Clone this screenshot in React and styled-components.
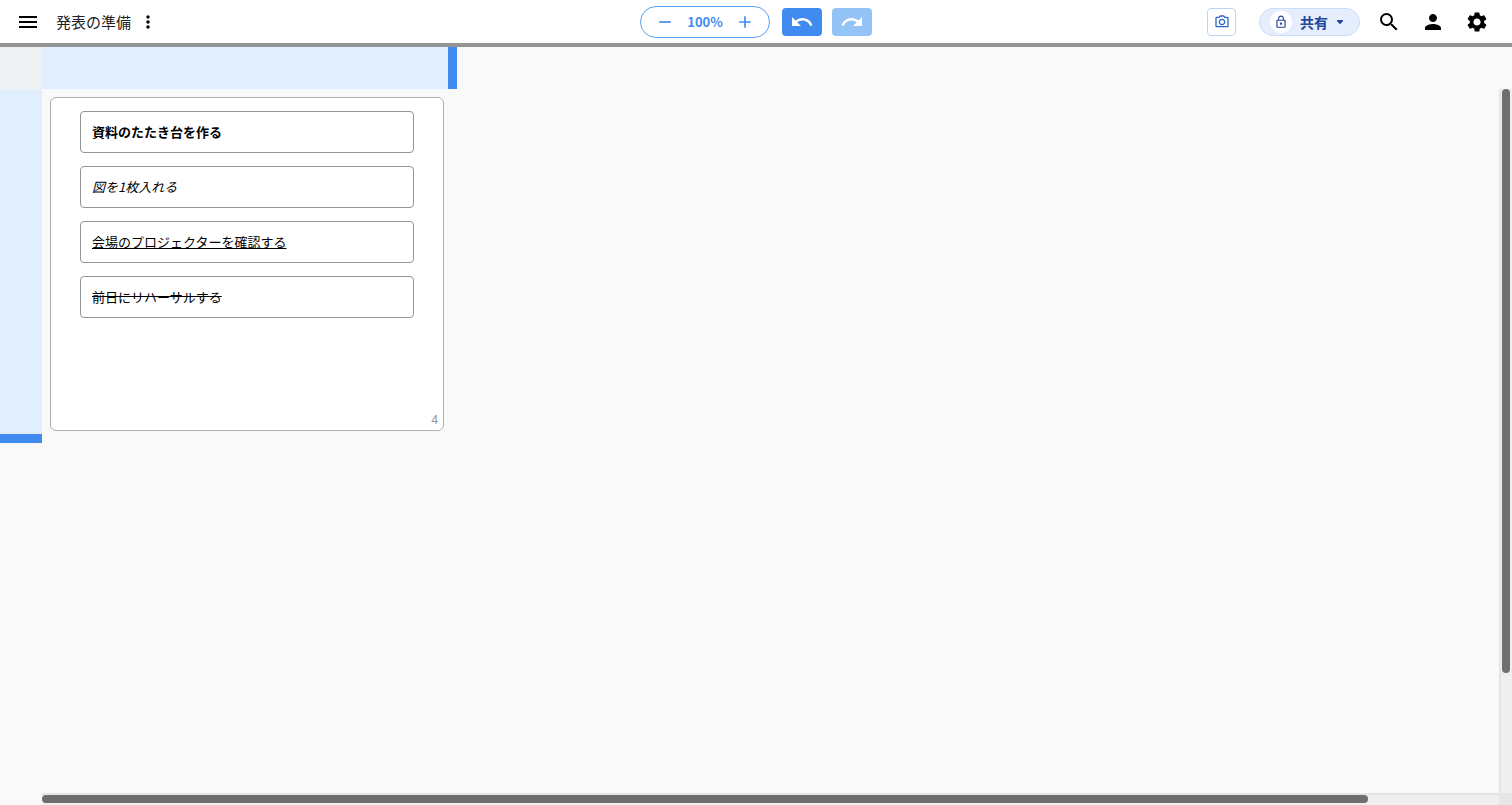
import React from 'react';
import styled, { createGlobalStyle } from 'styled-components';
import {
  MdAdd,
  MdLockOutline,
  MdMenu,
  MdMoreVert,
  MdOutlinePhotoCamera,
  MdPerson,
  MdRedo,
  MdRemove,
  MdSearch,
  MdSettings,
  MdUndo,
} from 'react-icons/md';

const tasks = [
  { id: 1, text: '資料のたたき台を作る', look: 'bold' },
  { id: 2, text: '図を1枚入れる', look: 'italic' },
  { id: 3, text: '会場のプロジェクターを確認する', look: 'underline' },
  { id: 4, text: '前日にリハーサルする', look: 'strike' },
];

const CaretIcon = () => (
  <svg width='8' height='6' viewBox='0 0 8 6' aria-hidden='true'>
    <path
      d='M1.6 1.7h4.8L4 4.2z'
      fill='currentColor'
      stroke='currentColor'
      strokeWidth='1.4'
      strokeLinejoin='round'
    />
  </svg>
);

const App = () => {
  return (
    <>
      <GlobalStyle />
      <Page>
        <Header>
          <TitleGroup>
            <IconButton $width={40} aria-label='メニュー'>
              <MdMenu size={24} />
            </IconButton>
            <Title>発表の準備</Title>
            <IconButton $width={34} aria-label='その他'>
              <MdMoreVert size={20} />
            </IconButton>
          </TitleGroup>
          <ZoomGroup>
            <ZoomControl>
              <ZoomButton aria-label='縮小'>
                <MdRemove size={20} />
              </ZoomButton>
              <span>100%</span>
              <ZoomButton aria-label='拡大'>
                <MdAdd size={20} />
              </ZoomButton>
            </ZoomControl>
            <HistoryButton aria-label='元に戻す'>
              <MdUndo size={24} />
            </HistoryButton>
            <HistoryButton $faded aria-label='やり直す'>
              <MdRedo size={24} />
            </HistoryButton>
          </ZoomGroup>
          <Actions>
            <CameraButton aria-label='スクリーンショット'>
              <MdOutlinePhotoCamera size={16} />
            </CameraButton>
            <ShareButton>
              <LockBadge>
                <MdLockOutline size={14} />
              </LockBadge>
              共有
              <CaretIcon />
            </ShareButton>
            <IconButton $width={44} aria-label='検索'>
              <MdSearch size={24} />
            </IconButton>
            <IconButton $width={44} aria-label='アカウント'>
              <MdPerson size={24} />
            </IconButton>
            <IconButton $width={44} aria-label='設定'>
              <MdSettings size={24} />
            </IconButton>
          </Actions>
        </Header>
        <Board>
          <Corner />
          <ColumnHead />
          <RowHead />
          <Cell>
            <Card>
              <TaskList>
                {tasks.map(({ id, text, look }) => (
                  <Task key={id} $look={look}>
                    {text}
                  </Task>
                ))}
              </TaskList>
              <Count>{tasks.length}</Count>
            </Card>
          </Cell>
          <VerticalTrack>
            <VerticalThumb />
          </VerticalTrack>
          <HorizontalTrack>
            <HorizontalThumb />
          </HorizontalTrack>
          <TrackCorner />
        </Board>
      </Page>
    </>
  );
};

export default App;

const GlobalStyle = createGlobalStyle`
  * {
    box-sizing: border-box;
  }
  body {
    margin: 0;
    background: #f9f9f9;
    color: #000;
    font-family: 'Noto Sans CJK JP', sans-serif;
  }
  button {
    display: flex;
    align-items: center;
    justify-content: center;
    padding: 0;
    border: none;
    background: none;
    color: inherit;
    font: inherit;
    cursor: pointer;
  }
`;

const Page = styled.div`
  display: flex;
  flex-direction: column;
  min-height: 100vh;
`;

const Header = styled.header`
  display: grid;
  grid-template-columns: 1fr auto 1fr;
  align-items: center;
  height: 47px;
  padding: 0 8px;
  background: #fff;
  border-bottom: 4px solid #949494;
`;

const TitleGroup = styled.div`
  display: flex;
  align-items: center;
`;

const Title = styled.h1`
  margin: 0 0 0 8px;
  color: #222;
  font-size: 15px;
  font-weight: 400;
  line-height: 24px;
`;

const IconButton = styled.button`
  width: ${({ $width }) => $width}px;
  height: 40px;
`;

const ZoomGroup = styled.div`
  display: flex;
  align-items: center;
  gap: 10px;
`;

const ZoomControl = styled.div`
  display: flex;
  align-items: center;
  justify-content: space-between;
  width: 130px;
  height: 32px;
  padding: 0 12px;
  margin-right: 2px;
  border: 1px solid #5a9fee;
  border-radius: 16px;
  color: #408bf0;
  font-size: 13px;
  font-weight: 700;
  line-height: 20px;
`;

const ZoomButton = styled.button`
  width: 24px;
  height: 24px;
`;

const HistoryButton = styled.button`
  && {
    width: 40px;
    height: 28px;
    border-radius: 4px;
    background: ${({ $faded }) => ($faded ? '#93c3f7' : '#408bf0')};
    color: #fff;
  }
`;

const Actions = styled.div`
  display: flex;
  align-items: center;
  justify-content: flex-end;
  padding-right: 5px;
`;

const CameraButton = styled.button`
  && {
    width: 29px;
    height: 28px;
    margin-right: 23px;
    border: 1px solid #bcd5f5;
    border-radius: 4px;
    color: #2f66c8;
  }
`;

const ShareButton = styled.button`
  && {
    justify-content: flex-start;
    width: 101px;
    height: 28px;
    margin-right: 7px;
    padding-left: 10px;
    border: 1px solid #c9def9;
    border-radius: 14px;
    background: #e6edfc;
    color: #24469c;
    font-size: 14px;
    font-weight: 700;
    line-height: 20px;
    gap: 8px;
  }
`;

const LockBadge = styled.span`
  display: flex;
  align-items: center;
  justify-content: center;
  width: 22px;
  height: 22px;
  border-radius: 50%;
  background: #fff;
`;

const Board = styled.main`
  flex: 1;
  display: grid;
  grid-template-columns: 42px 415px 1fr 13px;
  grid-template-rows: 42px auto 1fr 12px;
`;

const Corner = styled.div`
  background: #f0f1f3;
`;

const ColumnHead = styled.div`
  background: #e1effd;
  border-right: 9px solid #408bf0;
`;

const RowHead = styled.div`
  grid-area: 2 / 1;
  background: #e1effd;
  border-bottom: 9px solid #408bf0;
`;

const Cell = styled.section`
  display: flex;
  grid-area: 2 / 2;
  padding: 8px 13px 12px 8px;
`;

const Card = styled.article`
  flex: 1;
  display: flex;
  flex-direction: column;
  justify-content: space-between;
  min-height: 334px;
  padding: 13px 5px 2px 29px;
  border: 1px solid #b0b0b0;
  border-radius: 6px;
  background: #fff;
`;

const TaskList = styled.ul`
  display: flex;
  flex-direction: column;
  gap: 13px;
  margin: 0 24px 0 0;
  padding: 0;
  list-style: none;
`;

const Task = styled.li`
  padding: 10px 11px;
  border: 1px solid #949494;
  border-radius: 4px;
  font-size: 13px;
  font-weight: ${({ $look }) => ($look === 'bold' ? 700 : 400)};
  font-style: ${({ $look }) => ($look === 'italic' ? 'italic' : 'normal')};
  line-height: 20px;
  text-decoration: ${({ $look }) =>
    ({ underline: 'underline', strike: 'line-through' })[$look] || 'none'};
`;

const Count = styled.span`
  align-self: flex-end;
  color: #999;
  font-family: Roboto, sans-serif;
  font-size: 12px;
  line-height: 16px;
`;

const VerticalTrack = styled.div`
  grid-area: 2 / 4 / 4 / 5;
  padding-left: 1px;
  background: #efefef;
  border-left: 2px solid #e4e4e4;
`;

const VerticalThumb = styled.div`
  width: 8px;
  height: 83%;
  border-radius: 4px;
  background: #6e6e6e;
`;

const HorizontalTrack = styled.div`
  grid-area: 4 / 2 / 5 / 4;
  background: #efefef;
  border-top: 2px solid #e4e4e4;
`;

const HorizontalThumb = styled.div`
  width: 91%;
  height: 8px;
  border-radius: 4px;
  background: #6e6e6e;
`;

const TrackCorner = styled.div`
  grid-area: 4 / 4;
  background: #e6e6e6;
`;
